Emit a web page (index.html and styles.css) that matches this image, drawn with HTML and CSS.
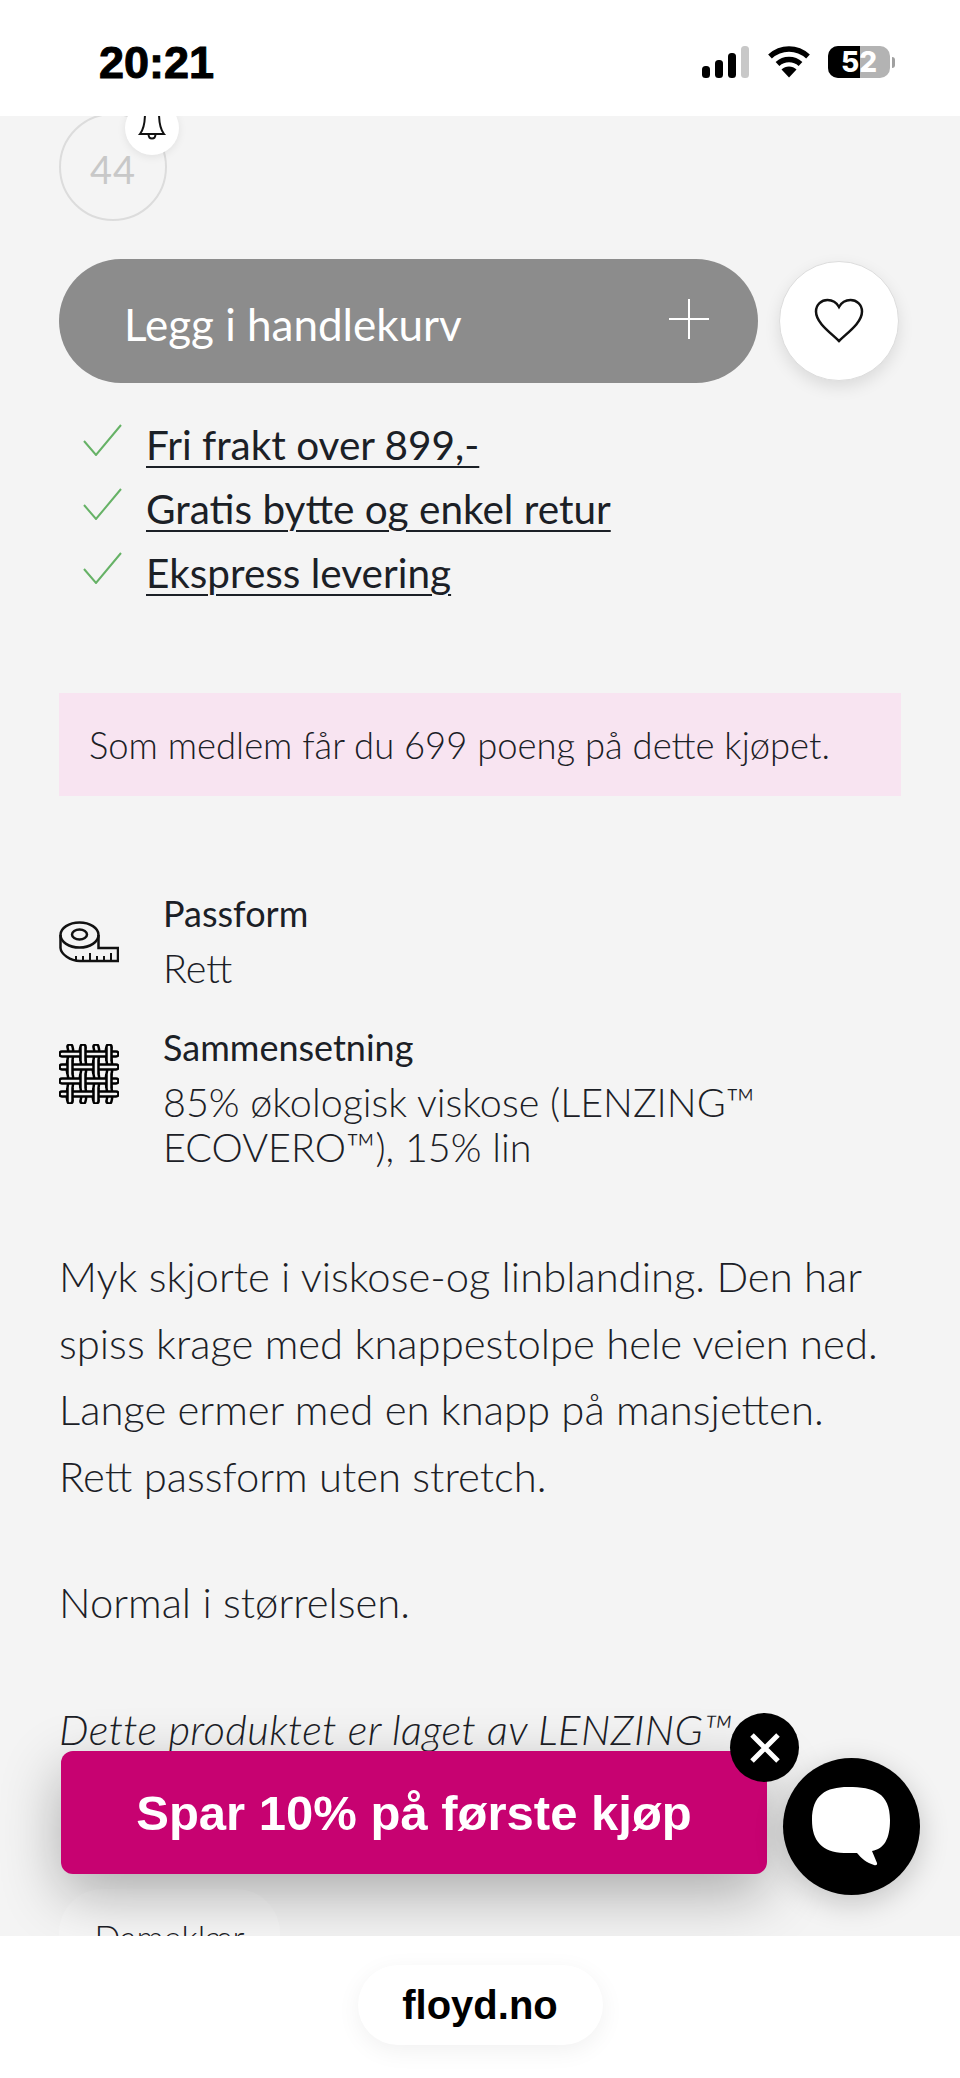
FILE: index.html
```html
<!DOCTYPE html>
<html lang="no">
<head>
    <meta charset="UTF-8">
    <title>floyd.no</title>
    <link rel="stylesheet" href="styles.css">
</head>
<body>
    <div class="phone">
        <header class="status">
            <span class="clock">20:21</span>
            <div class="status-icons">
                <svg class="signal" width="48" height="32" viewBox="0 0 48 32">
                    <rect x="0" y="20" width="8" height="12" rx="3.5" fill="#000"/>
                    <rect x="13" y="14" width="8" height="18" rx="3.5" fill="#000"/>
                    <rect x="26" y="7" width="8" height="25" rx="3.5" fill="#000"/>
                    <rect x="39" y="0" width="8" height="32" rx="3.5" fill="#c8c8c8"/>
                </svg>
                <svg class="wifi" width="42" height="32" viewBox="0 0 42 32">
                    <path d="M2 10.5C13 0.5 29 0.5 40 10.5" fill="none" stroke="#000" stroke-width="5.5"/>
                    <path d="M9.5 18C16 12 26 12 32.5 18" fill="none" stroke="#000" stroke-width="5.5"/>
                    <path d="M13.5 23.5C17.5 19.5 24.5 19.5 28.5 23.5L21 31.5Z" fill="#000"/>
                </svg>
                <div class="battery">
                    <div class="battery-body"><span class="battery-level"></span><span class="battery-text">52</span></div>
                    <span class="battery-tip"></span>
                </div>
            </div>
        </header>

        <main class="content">
            <div class="size">
                <span class="size-num">44</span>
                <span class="bell">
                    <svg width="30" height="32" viewBox="0 0 30 32">
                        <path d="M8 3C8 1 10 -1 15 -1C20 -1 22 1 22 3C22 12 23 19 27 24H3C7 19 8 12 8 3Z" fill="#fff" stroke="#111" stroke-width="2"/>
                        <path d="M11.5 24C11.5 30 18.5 30 18.5 24" fill="none" stroke="#111" stroke-width="2"/>
                    </svg>
                </span>
            </div>

            <div class="buy-row">
                <button class="add-btn">
                    <span>Legg i handlekurv</span>
                    <svg width="42" height="42" viewBox="0 0 42 42">
                        <path d="M21 1V41M1 21H41" stroke="#fff" stroke-width="2" fill="none"/>
                    </svg>
                </button>
                <button class="fav-btn">
                    <svg width="50" height="46" viewBox="0 0 50 46">
                        <path d="M25 43C17 35 2 25 2 13.500C2 6.500 7.500 2 13.500 2C18.500 2 22.500 4.500 25 9C27.500 4.500 31.500 2 36.500 2C42.500 2 48 6.500 48 13.500C48 25 33 35 25 43Z" fill="none" stroke="#111" stroke-width="2.500"/>
                    </svg>
                </button>
            </div>

            <ul class="usp">
                <li><svg width="40" height="32" viewBox="0 0 40 32"><path d="M1 17L13 31L38 1" fill="none" stroke="#66b266" stroke-width="2"/></svg><a href="#">Fri frakt over 899,-</a></li>
                <li><svg width="40" height="32" viewBox="0 0 40 32"><path d="M1 17L13 31L38 1" fill="none" stroke="#66b266" stroke-width="2"/></svg><a href="#">Gratis bytte og enkel retur</a></li>
                <li><svg width="40" height="32" viewBox="0 0 40 32"><path d="M1 17L13 31L38 1" fill="none" stroke="#66b266" stroke-width="2"/></svg><a href="#">Ekspress levering</a></li>
            </ul>

            <p class="points">Som medlem får du 699 poeng på dette kjøpet.</p>

            <div class="spec">
                <svg width="60" height="42" viewBox="0 0 60 42">
                    <ellipse cx="20.500" cy="14" rx="19" ry="12.500" fill="none" stroke="#111" stroke-width="2.500"/>
                    <ellipse cx="20.500" cy="13.500" rx="7.500" ry="5" fill="none" stroke="#111" stroke-width="2.500"/>
                    <path d="M1.500 14V27C2 33 11 40 21 40H59V27H39.500V14" fill="none" stroke="#111" stroke-width="2.500"/>
                    <path d="M17 40V35M24 40V35M31 40V32M38 40V35M45 40V35M52 40V32" stroke="#111" stroke-width="2"/>
                </svg>
                <div>
                    <h3>Passform</h3>
                    <p>Rett</p>
                </div>
            </div>
            <div class="spec spec-weave">
                <svg width="60" height="60" viewBox="0 0 60 60">
                    <g fill="none" stroke-linecap="round">
                        <path stroke="#000" stroke-width="7.500" d="M11 3C14 12 8 20 11 30C14 40 8 48 11 57M24 3C21 12 27 20 24 30C21 40 27 48 24 57M37 3C40 12 34 20 37 30C40 40 34 48 37 57M50 3C47 12 53 20 50 30C47 40 53 48 50 57"/>
                        <path stroke="#f4f4f4" stroke-width="2.500" d="M11 3C14 12 8 20 11 30C14 40 8 48 11 57M24 3C21 12 27 20 24 30C21 40 27 48 24 57M37 3C40 12 34 20 37 30C40 40 34 48 37 57M50 3C47 12 53 20 50 30C47 40 53 48 50 57"/>
                        <path stroke="#000" stroke-width="7.500" d="M3 10H57M3 23H57M3 37H57M3 50H57"/>
                        <path stroke="#f4f4f4" stroke-width="2.500" d="M3 10H57M3 23H57M3 37H57M3 50H57"/>
                    </g>
                    <g fill="none">
                        <path stroke="#000" stroke-width="7.500" d="M24 3V17M50 3V17M11 16V30M37 16V30M24 30V44M50 30V44M11 44V57M37 44V57"/>
                        <path stroke="#f4f4f4" stroke-width="2.500" d="M24 3V17M50 3V17M11 16V30M37 16V30M24 30V44M50 30V44M11 44V57M37 44V57"/>
                    </g>
                </svg>
                <div>
                    <h3>Sammensetning</h3>
                    <p>85% økologisk viskose (LENZING™ ECOVERO™), 15% lin</p>
                </div>
            </div>

            <div class="desc">
                <p>Myk skjorte i viskose-og linblanding. Den har<br>spiss krage med knappestolpe hele veien ned.<br>Lange ermer med en knapp på mansjetten.<br>Rett passform uten stretch.</p>
                <p>Normal i størrelsen.</p>
                <p class="desc-note"><em>Dette produktet er laget av LENZING™ ECOVERO™</em></p>
            </div>

            <span class="tag">Dameklær</span>
        </main>

        <footer class="browser-bar">
            <span class="url">floyd.no</span>
        </footer>

        <button class="promo">Spar 10% på første kjøp</button>
        <span class="promo-close">
            <svg width="32" height="32" viewBox="0 0 32 32"><path d="M3 3L29 29M29 3L3 29" stroke="#fff" stroke-width="5"/></svg>
        </span>
        <span class="chat">
            <svg width="80" height="80" viewBox="0 0 80 80">
                <path d="M36 0C62 0 78 6 78 33C78 52 72 62 60 64L65 76C65.500 78 64 78.500 62 78C55 76 49 71 45 66C40 66 36 66 32 66C10 65 0 54 0 33C0 8 14 0 36 0Z" fill="#fff"/>
            </svg>
        </span>
    </div>
</body>
</html>
```

FILE: styles.css
```css
* {
    box-sizing: border-box;
}
html, body {
    margin: 0;
    padding: 0;
}
body {
    font-family: Lato, "Liberation Sans", sans-serif;
    color: #1b2026;
    background-color: #f4f4f4;
}
.phone {
    position: relative;
    width: 960px;
    height: 2078px;
    display: flex;
    flex-direction: column;
    overflow: hidden;
}

/* status bar */
.status {
    height: 116px;
    flex: none;
    background: white;
    display: flex;
    justify-content: space-between;
    align-items: flex-start;
    padding: 39px 65px 0 99px;
    position: relative;
    z-index: 2;
}
.clock {
    font-family: "Liberation Sans", sans-serif;
    font-weight: 700;
    font-size: 45px;
    line-height: 48px;
    color: #000;
    -webkit-text-stroke: 1px #000;
}
.status-icons {
    display: flex;
    align-items: center;
    gap: 18px;
    padding-top: 7px;
}
.battery {
    display: flex;
    align-items: center;
    gap: 2px;
}
.battery-body {
    position: relative;
    width: 62px;
    height: 32px;
    border-radius: 10px;
    background: #b3b3b3;
    overflow: hidden;
    text-align: center;
}
.battery-level {
    position: absolute;
    left: 0;
    top: 0;
    bottom: 0;
    width: 32px;
    background: #000;
}
.battery-text {
    position: relative;
    font-family: Inter, sans-serif;
    font-weight: 800;
    font-size: 28px;
    line-height: 32px;
    color: white;
}
.battery-tip {
    width: 3px;
    height: 11px;
    background: #a0a0a0;
    border-radius: 0 3px 3px 0;
}

/* content */
.content {
    flex: 1;
    min-height: 0;
    overflow: hidden;
    padding: 0 59px;
}
.size {
    position: relative;
    width: 108px;
    height: 108px;
    margin: -3px 0 0 0;
    border: 2px solid #dcdcdc;
    border-radius: 50%;
    display: flex;
    align-items: center;
    justify-content: center;
}
.size-num {
    font-size: 38px;
    font-weight: 400;
    color: #c8c8c8;
    letter-spacing: 1px;
    margin-top: 4px;
}
.bell {
    position: absolute;
    left: 64px;
    top: -14px;
    width: 54px;
    height: 54px;
    border-radius: 50%;
    background: white;
    box-shadow: 0 2px 8px rgba(0, 0, 0, 0.08);
    display: flex;
    align-items: center;
    justify-content: center;
}
.bell svg {
    margin-top: -4px;
}
.buy-row {
    display: flex;
    align-items: center;
    gap: 21px;
    margin-top: 38px;
}
.add-btn {
    width: 699px;
    height: 124px;
    border: none;
    border-radius: 62px;
    background-color: #8c8c8c;
    color: white;
    font-family: inherit;
    font-size: 44px;
    font-weight: 400;
    display: flex;
    align-items: center;
    justify-content: space-between;
    padding: 0 48px 0 65px;
}
.add-btn span {
    margin-top: 6px;
}
.add-btn svg {
    margin-top: -4px;
}
.fav-btn {
    width: 120px;
    height: 120px;
    flex: none;
    border: 1px solid #ddd;
    border-radius: 50%;
    background: white;
    box-shadow: 0 6px 16px rgba(0, 0, 0, 0.1);
    display: flex;
    align-items: center;
    justify-content: center;
    padding: 0;
}
.usp {
    list-style: none;
    margin: 29px 0 0 0;
    padding: 0 0 0 24px;
}
.usp li {
    height: 64px;
    display: flex;
    align-items: center;
    gap: 23px;
    font-size: 40.500px;
}
.usp li svg {
    margin-top: -9px;
    flex: none;
}
.usp a {
    color: #1b2026;
    text-decoration: underline;
    text-decoration-thickness: 2px;
    text-underline-offset: 6px;
}
.points {
    margin: 89px 0 0 0;
    height: 103px;
    background: #f8e4f1;
    padding: 0 30px;
    display: flex;
    align-items: center;
    font-size: 36.400px;
    font-weight: 300;
}
.spec {
    display: flex;
    gap: 44px;
    margin-top: 95px;
    align-items: flex-start;
}
.spec svg {
    flex: none;
    margin-top: 30px;
}
.spec h3 {
    margin: 0;
    font-size: 36px;
    line-height: 44px;
    font-weight: 400;
}
.spec p {
    margin: 10px 0 0 0;
    font-size: 39.500px;
    line-height: 45px;
    font-weight: 300;
}
.spec-weave {
    margin-top: 35px;
}
.spec-weave svg {
    margin-top: 19px;
}
.desc {
    margin-top: 74px;
    font-size: 41.800px;
    line-height: 66.500px;
    font-weight: 300;
}
.desc p {
    margin: 0 0 60px 0;
}
.desc-note {
    letter-spacing: 0.4px;
}
.tag {
    display: inline-block;
    width: 221px;
    height: 90px;
    padding-top: 27px;
    text-align: center;
    background: #f7f7f7;
    border-radius: 44px;
    font-size: 34px;
    font-weight: 300;
}

/* browser bar */
.browser-bar {
    height: 142px;
    flex: none;
    background: white;
    display: flex;
    justify-content: center;
    padding-top: 29px;
    position: relative;
    z-index: 2;
}
.url {
    width: 245px;
    height: 80px;
    border-radius: 40px;
    background: white;
    box-shadow: 0 6px 24px rgba(0, 0, 0, 0.06);
    font-family: "Liberation Sans", sans-serif;
    font-weight: 700;
    font-size: 40px;
    color: #000;
    display: flex;
    align-items: center;
    justify-content: center;
}

/* floating */
.promo {
    position: absolute;
    left: 61px;
    top: 1751px;
    width: 706px;
    height: 123px;
    border: none;
    border-radius: 12px;
    background-color: #c70271;
    color: white;
    font-family: "Liberation Sans", sans-serif;
    font-weight: 700;
    font-size: 49px;
    box-shadow: 0 20px 60px rgba(0, 0, 0, 0.3);
    z-index: 1;
}
.promo-close {
    position: absolute;
    left: 730px;
    top: 1713px;
    width: 69px;
    height: 69px;
    border-radius: 50%;
    background: black;
    display: flex;
    align-items: center;
    justify-content: center;
    z-index: 1;
}
.chat {
    position: absolute;
    left: 783px;
    top: 1758px;
    width: 137px;
    height: 137px;
    border-radius: 50%;
    background: black;
    box-shadow: 0 8px 30px rgba(0, 0, 0, 0.2);
    display: flex;
    align-items: center;
    justify-content: center;
    z-index: 1;
}
```
